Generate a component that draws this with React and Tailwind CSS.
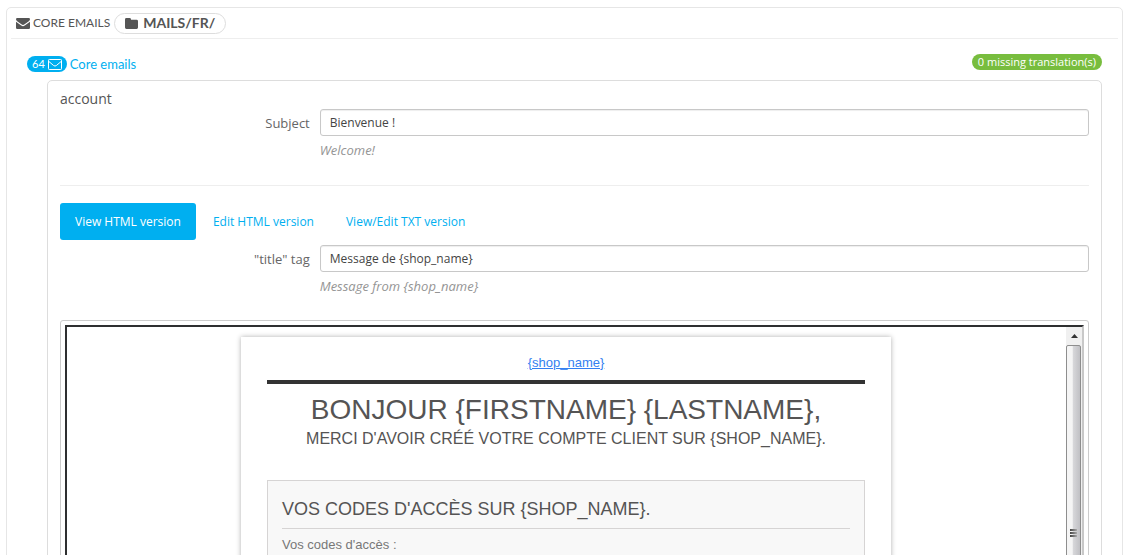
import React, { useState } from "react";

const EnvelopeIcon = ({ className }) => (
	<svg viewBox="0 0 14 11" className={className} fill="currentColor" aria-hidden="true">
		<path d="M1.2 0h11.6Q14 0 14 1.2 14 2.4 12.8 3.3L8.6 6.2Q7.6 7 7 7T5.4 6.2L1.2 3.3Q0 2.4 0 1.2 0 0 1.2 0z" />
		<path d="M0 3.8 4.9 7.2Q6.2 8.2 7 8.2T9.1 7.2L14 3.8V9.8Q14 11 12.8 11H1.2Q0 11 0 9.8z" />
	</svg>
);

const EnvelopeOutlineIcon = ({ className }) => (
	<svg viewBox="0 0 14 11" className={className} fill="none" stroke="currentColor" aria-hidden="true">
		<rect x="0.5" y="0.5" width="13" height="10" rx="0.8" />
		<path d="M1 2.6 5.6 6.5Q7 7.6 8.4 6.5L13 2.6" />
	</svg>
);

const FolderIcon = ({ className }) => (
	<svg viewBox="0 0 13 11" className={className} fill="currentColor" aria-hidden="true">
		<path d="M1.4 0H4.6Q6 0 6 1.4V1.8H11.6Q13 1.8 13 3.2V9.6Q13 11 11.6 11H1.4Q0 11 0 9.6V1.4Q0 0 1.4 0z" />
	</svg>
);

const TABS = ["View HTML version", "Edit HTML version", "View/Edit TXT version"];

const Field = ({ id, label, value, hint }) => {
	const [text, setText] = useState(value);

	return (
		<div className="-mx-[5px] grid grid-cols-4">
			<label htmlFor={id} className="px-[5px] pt-1 text-right text-[13px] leading-5 text-[#666]">
				{label}
			</label>
			<div className="col-span-3 px-[5px]">
				<input
					id={id}
					type="text"
					value={text}
					onChange={(e) => setText(e.target.value)}
					className="block h-[27px] w-full rounded-[3px] border border-[#c8c8c8] bg-white px-[9px] text-[12px] text-[#444] shadow-[inset_0_1px_1px_rgba(0,0,0,0.07)] outline-none"
				/>
				<p className="mt-[5px] text-[13px] leading-[18px] text-[#959595] italic">{hint}</p>
			</div>
		</div>
	);
};

const Scrollbar = () => (
	<div className="flex w-4 shrink-0 flex-col bg-[#f0f0f0]">
		<button type="button" aria-label="Scroll up" className="grid h-[18px] place-content-center">
			<svg viewBox="0 0 7 4" className="h-1 w-[7px]" fill="#333" aria-hidden="true">
				<path d="M3.5 0 7 4H0z" />
			</svg>
		</button>
		<div className="mr-px flex h-[376px] flex-col justify-center rounded-[2px] border border-[#8e8e8e] bg-linear-to-r from-[#f5f5f5] from-40% via-[#d6d6d9] via-50% to-[#c0c0c4]">
			<div className="mx-auto flex w-[7px] flex-col gap-px">
				<span className="h-0.5 bg-linear-to-r from-[#444] to-[#aaa]" />
				<span className="h-0.5 bg-linear-to-r from-[#444] to-[#aaa]" />
				<span className="h-0.5 bg-linear-to-r from-[#444] to-[#aaa]" />
			</div>
		</div>
	</div>
);

const MailPreview = () => (
	<div className="rounded-[3px] border border-[#ccc] p-1">
		<div className="flex h-[440px] overflow-hidden border-2 border-t-[#2e2f30] border-r-[#c8c8c8] border-b-[#c8c8c8] border-l-[#2e2f30]">
			<div className="flex-1 overflow-hidden pt-2.5 pr-px font-['Liberation_Sans',Arial,sans-serif] text-[#555454]">
				<article className="mx-auto h-[700px] w-full max-w-[650px] px-[26px] pt-4 text-center shadow-[0_0_5px_#afafaf]">
					<div className="text-[13px] leading-5">
						<a href="#shop" className="text-[#337ff1] underline">
							{"{shop_name}"}
						</a>
					</div>
					<hr className="mt-[7px] border-t-4 border-[#333]" />
					<h1 className="mt-[7px] text-[28px] leading-[38px] uppercase">{"Bonjour {firstname} {lastname},"}</h1>
					<p className="text-[16px] leading-5 uppercase">
						{"Merci d'avoir créé votre compte client sur {shop_name}."}
					</p>
					<section className="mt-[31px] h-[300px] border border-[#d6d4d4] bg-[#f8f8f8] px-3.5 pt-4 text-left">
						<h2 className="border-b border-[#d6d4d4] pb-[7px] text-[18px] leading-6 uppercase">
							{"Vos codes d'accès sur {shop_name}."}
						</h2>
						<p className="mt-1.5 text-[13px] leading-5 text-[#777]">Vos codes d'accès :</p>
					</section>
				</article>
			</div>
			<Scrollbar />
		</div>
	</div>
);

const App = () => {
	const [activeTab, setActiveTab] = useState(TABS[0]);

	return (
		<main className="h-screen overflow-hidden bg-white px-1.5 pt-[7px] font-['Open_Sans',sans-serif] text-[#555]">
			<section className="mr-[-1px] rounded-[5px] border border-[#e6e6e6] px-1 pb-5">
				<header className="flex h-[31px] items-center border-b border-[#eee] px-[5px] font-['Ubuntu_Condensed',Lato,sans-serif]">
					<EnvelopeIcon className="mr-[3px] h-[11px] w-3.5" />
					<h3 className="text-[12px] leading-5 uppercase">Core emails</h3>
					<span className="ml-1 flex h-[21px] items-center gap-[5px] rounded-full border border-[#ddd] px-2.5 text-[14px] leading-5 font-bold uppercase">
						<FolderIcon className="h-[11px] w-[13px]" />
						mails/fr/
					</span>
				</header>

				<div className="px-4">
					<div className="flex h-[41px] items-start justify-between pt-[15px] font-['Ubuntu_Condensed',Lato,sans-serif]">
						<a href="#core-emails" className="flex items-center gap-[3px] text-[13px] leading-5 text-[#00aff0]">
							<span className="flex h-4 items-center gap-[3px] rounded-full bg-[#00aff0] px-[5px] text-[11px] text-white">
								64
								<EnvelopeOutlineIcon className="h-[11px] w-3.5" />
							</span>
							Core emails
						</a>
						<span className="flex h-4 items-center rounded-full bg-[#78bd3e] px-1.5 font-['Open_Sans',sans-serif] text-[11px] text-white">
							0 missing translation(s)
						</span>
					</div>

					<div className="ml-5 rounded-[5px] border border-[#ddd] px-3 pt-2 pb-5">
						<h4 className="text-[14px] leading-5">account</h4>
						<Field id="subject" label="Subject" value="Bienvenue !" hint="Welcome!" />
						<hr className="mt-[26px] mb-[17px] border-[#eee]" />
						<div role="tablist" className="mb-[5px] flex gap-0.5">
							{TABS.map((tab) => (
								<button
									key={tab}
									type="button"
									role="tab"
									aria-selected={activeTab === tab}
									onClick={() => setActiveTab(tab)}
									className={`h-[37px] cursor-pointer rounded-[3px] px-[15px] text-[12px] leading-[17px] ${
										activeTab === tab ? "bg-[#00aff0] text-white" : "text-[#00aff0]"
									}`}
								>
									{tab}
								</button>
							))}
						</div>
						<Field id="title-tag" label={'"title" tag'} value="Message de {shop_name}" hint="Message from {shop_name}" />
						<div className="mt-[25px]">
							<MailPreview />
						</div>
					</div>
				</div>
			</section>
		</main>
	);
};

export default App;
